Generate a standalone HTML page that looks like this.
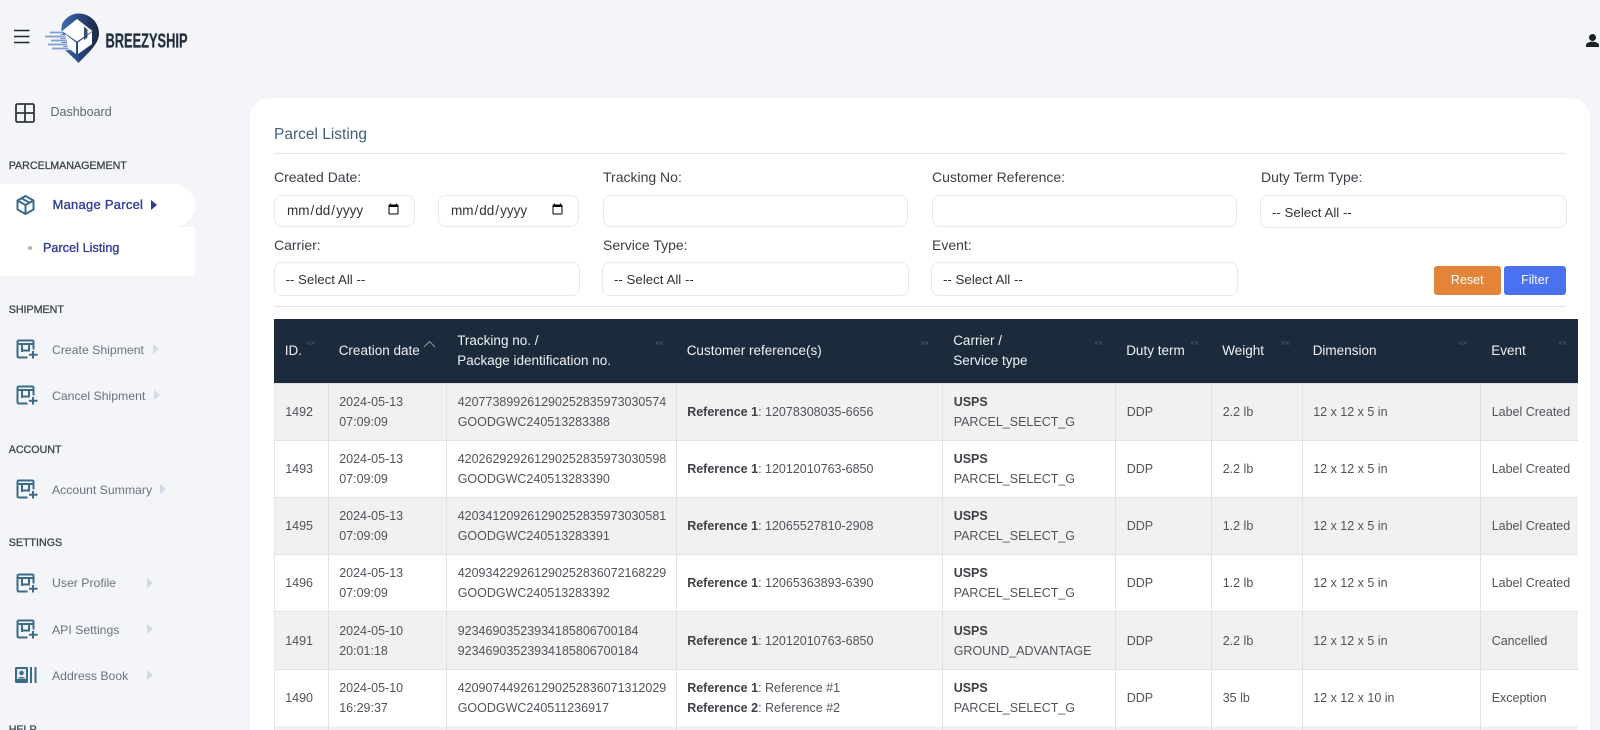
<!DOCTYPE html>
<html lang="en"><head><meta charset="utf-8"><title>Parcel Listing</title>
<style>
*{box-sizing:border-box}
html,body{margin:0;padding:0;width:1600px;height:730px;overflow:hidden;background:#f3f5f8;font-family:"Liberation Sans",sans-serif}
#w{position:relative;width:1600px;height:730px;overflow:hidden;background:#f3f5f8}
.a{position:absolute}
.s{position:absolute;white-space:nowrap;line-height:16px;font-size:12.25px;color:#6b7280;left:52px}
.h{position:absolute;left:8.7px;white-space:nowrap;font-size:10.7px;line-height:14px;color:#3f444d;font-weight:400;-webkit-text-stroke:.3px #3f444d}
.tri{position:absolute;width:0;height:0;border-left:6px solid #d3d9e6;border-top:5.5px solid transparent;border-bottom:5.5px solid transparent}
.ic{position:absolute;left:15.5px;width:22px;height:20px}
.card{position:absolute;left:250px;top:98px;width:1340px;height:632px;background:#fff;border-radius:20px 20px 0 0}
.l{position:absolute;font-size:14px;line-height:18px;color:#3a3f47;white-space:nowrap}
input,select{position:absolute;margin:0;background:#fff;border:1px solid #e9eaec;border-radius:8px;font:13.3px "Liberation Sans",sans-serif;color:#333;outline:0;appearance:none;-webkit-appearance:none}
input[type=date]{padding:0 12px 2px 11px;-webkit-appearance:auto;appearance:auto;font-size:13.5px}
select{padding:2px 11px 0}
.hr{position:absolute;left:274px;width:1292px;height:1px;background:#e3e5e8}
.b{position:absolute;top:266px;height:29px;color:#fff;font-size:12.5px;line-height:29px;text-align:center;border-radius:3px}
table{position:absolute;left:273.5px;top:319px;width:1303.5px;table-layout:fixed;border-collapse:collapse;font-size:12.5px;color:#50545a}
th{background:#1c2b3c;color:#eef1f4;font-weight:400;font-size:13.5px;line-height:20.5px;text-align:left;padding:0 0 0 10.7px;height:64.5px;position:relative}
td{padding:0 0 0 10.7px;line-height:20px;height:57px;border:1px solid #e2e2e2;white-space:nowrap;overflow:hidden}
tr.g td{background:#f1f1f1}
td:first-child{border-left:1px solid #e8e8e8}
td:last-child{border-right:0}
td b{font-weight:700;color:#3d4045}
th i{position:absolute;top:20px;font-style:normal;font-size:9px;line-height:9px;color:#46586b;letter-spacing:-1px}
.v{position:absolute;top:726px;height:4px;width:1px;background:#e2e2e2}
</style></head><body><div id="w">

<!-- hamburger -->
<svg class="a" style="left:14px;top:29px" width="16" height="15" viewBox="0 0 16 15"><path d="M0 1.500H15.500M0 7.500H15.500M0 13.500H15.500" stroke="#22262c" stroke-width="1.400" fill="none"/></svg>

<!-- logo -->
<svg class="a" style="left:44px;top:12px" width="148" height="54" viewBox="44 12 148 54">
<defs><linearGradient id="g" x1="0" y1="0" x2="1" y2="0"><stop offset="0" stop-color="#3f6fb4"/><stop offset=".55" stop-color="#27447a"/><stop offset="1" stop-color="#1a2740"/></linearGradient></defs>
<path d="M78.500 13.500C90 13.500 99 22.500 99 33.500C99 44 88 53 78.500 63C74 58 69 54 65 50L60 40L62 24C66 17 72 13.500 78.500 13.500Z" fill="url(#g)"/>
<path d="M50 32.500H63M45 36.500H66M51 40.500H66M48 44.500H68M52 48.500H70" stroke="#f3f5f8" stroke-width="3.200" fill="none"/>
<path d="M50 32.500H63M45 36.500H66M51 40.500H66M48 44.500H68M52 48.500H70" stroke="#7f9fd6" stroke-width="1.800" fill="none"/>
<path d="M62 31L77 19L92.500 31L77 41.500Z" fill="#fff"/>
<path d="M65 34L76 42.500V54L68 48Z" fill="#fff"/>
<path d="M78 42.500L92 32V44L78 54Z" fill="#fff"/>
<path d="M84 26.500L87.500 29.500V37.500L84 40Z" fill="#3a5070"/>
<text x="105.500" y="47.500" font-family="Liberation Sans" font-weight="700" font-size="20.500" fill="#222e40" stroke="#222e40" stroke-width=".25" textLength="82" lengthAdjust="spacingAndGlyphs">BREEZYSHIP</text>
</svg>

<!-- user -->
<svg class="a" style="left:1584px;top:32px" width="16" height="16" viewBox="0 0 16 16"><circle cx="8.500" cy="5.500" r="3.500" fill="#1c2026"/><path d="M2 15V13C2 10.800 6 9.600 8.500 9.600C11 9.600 15 10.800 15 13V15Z" fill="#1c2026"/></svg>

<!-- sidebar -->
<svg class="a" style="left:14.500px;top:102.500px" width="20" height="20" viewBox="0 0 20 20"><rect x="1" y="1" width="18" height="18" rx="1.500" fill="none" stroke="#33373d" stroke-width="1.800"/><path d="M10 1V19M1 10H19" stroke="#33373d" stroke-width="1.800"/></svg>
<div class="s" style="left:50.500px;top:103.500px;font-size:12.500px;color:#63676e">Dashboard</div>

<div class="h" style="top:158.500px;word-spacing:-3px">PARCEL MANAGEMENT</div>
<div class="a" style="left:0;top:184px;width:195px;height:43px;background:#fff;border-radius:0 22px 22px 0"></div>
<div class="a" style="left:0;top:227px;width:195px;height:49px;background:#fff"></div>
<svg class="a" style="left:15px;top:194px" width="22" height="22" viewBox="0 0 22 22" fill="none" stroke="#3a6b88" stroke-width="2" stroke-linejoin="round"><path d="M10.500 2L18.500 6.500V15.500L10.500 20L2.500 15.500V6.500Z"/><path d="M2.500 6.500L10.500 11L18.500 6.500M10.500 11V20M6.500 4.300L14.500 8.800"/></svg>
<div class="s" style="left:52.500px;top:197px;font-size:13px;color:#323c96;-webkit-text-stroke:.35px #323c96;letter-spacing:.25px">Manage Parcel</div>
<div class="tri" style="left:151px;top:199.500px;border-left-color:#323c96"></div>
<div class="a" style="left:27.500px;top:246px;width:4px;height:4px;border-radius:50%;background:#b4b6bb"></div>
<div class="s" style="left:43px;top:240px;font-size:12.500px;color:#323c96;-webkit-text-stroke:.35px #323c96;letter-spacing:.1px">Parcel Listing</div>

<div class="h" style="top:302.500px">SHIPMENT</div>
<svg class="ic" style="top:339px" viewBox="0 0 22 20" fill="none" stroke="#3a6b88" stroke-width="2"><path d="M11.500 18.500H3C2 18.500 1.500 18 1.500 17V3C1.500 2 2 1.500 3 1.500H16C17 1.500 17.500 2 17.500 3V10.500M1.500 5H17.500M6 13V5M6 11.500H13V5"/><path d="M17 12V19.500M13 15.700H21.500"/></svg>
<div class="s" style="top:341.500px">Create Shipment</div><div class="tri" style="left:153px;top:344px"></div>
<svg class="ic" style="top:385px" viewBox="0 0 22 20" fill="none" stroke="#3a6b88" stroke-width="2"><path d="M11.500 18.500H3C2 18.500 1.500 18 1.500 17V3C1.500 2 2 1.500 3 1.500H16C17 1.500 17.500 2 17.500 3V10.500M1.500 5H17.500M6 13V5M6 11.500H13V5"/><path d="M17 12V19.500M13 15.700H21.500"/></svg>
<div class="s" style="top:387.500px">Cancel Shipment</div><div class="tri" style="left:154px;top:390px"></div>

<div class="h" style="top:442.500px">ACCOUNT</div>
<svg class="ic" style="top:479px" viewBox="0 0 22 20" fill="none" stroke="#3a6b88" stroke-width="2"><path d="M11.500 18.500H3C2 18.500 1.500 18 1.500 17V3C1.500 2 2 1.500 3 1.500H16C17 1.500 17.500 2 17.500 3V10.500M1.500 5H17.500M6 13V5M6 11.500H13V5"/><path d="M17 12V19.500M13 15.700H21.500"/></svg>
<div class="s" style="top:481.500px">Account Summary</div><div class="tri" style="left:160px;top:484px"></div>

<div class="h" style="top:536px">SETTINGS</div>
<svg class="ic" style="top:573px" viewBox="0 0 22 20" fill="none" stroke="#3a6b88" stroke-width="2"><path d="M11.500 18.500H3C2 18.500 1.500 18 1.500 17V3C1.500 2 2 1.500 3 1.500H16C17 1.500 17.500 2 17.500 3V10.500M1.500 5H17.500M6 13V5M6 11.500H13V5"/><path d="M17 12V19.500M13 15.700H21.500"/></svg>
<div class="s" style="top:575px">User Profile</div><div class="tri" style="left:147px;top:577.500px"></div>
<svg class="ic" style="top:619px" viewBox="0 0 22 20" fill="none" stroke="#3a6b88" stroke-width="2"><path d="M11.500 18.500H3C2 18.500 1.500 18 1.500 17V3C1.500 2 2 1.500 3 1.500H16C17 1.500 17.500 2 17.500 3V10.500M1.500 5H17.500M6 13V5M6 11.500H13V5"/><path d="M17 12V19.500M13 15.700H21.500"/></svg>
<div class="s" style="top:621.500px">API Settings</div><div class="tri" style="left:147px;top:624px"></div>
<svg class="a" style="left:14px;top:665px" width="23" height="20" viewBox="0 0 23 20"><rect x="1" y="2" width="13" height="16" rx="1.500" fill="#3a6b88"/><rect x="3" y="4" width="9" height="10" fill="#e8eef2"/><circle cx="7.500" cy="8" r="2.200" fill="#3a6b88"/><path d="M4 13.500C4.500 11.500 10.500 11.500 11 13.500Z" fill="#3a6b88"/><path d="M17 2V18M21.500 2V18" stroke="#3a6b88" stroke-width="2"/></svg>
<div class="s" style="top:667.500px">Address Book</div><div class="tri" style="left:147px;top:670px"></div>
<div class="h" style="top:723px;height:7px;overflow:hidden">HELP</div>

<!-- card -->
<div class="card"></div>
<div class="a" style="left:274px;top:125.500px;font-size:15.500px;line-height:18px;color:#3f6178;white-space:nowrap">Parcel Listing</div>
<div class="hr" style="top:153px"></div>

<div class="l" style="left:274px;top:168px">Created Date:</div>
<div class="l" style="left:603px;top:168px">Tracking No:</div>
<div class="l" style="left:932px;top:168px">Customer Reference:</div>
<div class="l" style="left:1261px;top:168px">Duty Term Type:</div>
<input type="date" style="left:274px;top:195px;width:141px;height:32px">
<input type="date" style="left:438px;top:195px;width:141px;height:32px">
<input type="text" style="left:603px;top:195px;width:305px;height:32px">
<input type="text" style="left:932px;top:195px;width:305px;height:32px">
<select style="left:1260px;top:194.500px;width:306.500px;height:33px"><option>-- Select All --</option></select>

<div class="l" style="left:274px;top:236px">Carrier:</div>
<div class="l" style="left:603px;top:236px">Service Type:</div>
<div class="l" style="left:932px;top:236px">Event:</div>
<select style="left:273.500px;top:262px;width:306.500px;height:33.500px"><option>-- Select All --</option></select>
<select style="left:602px;top:262px;width:306.500px;height:33.500px"><option>-- Select All --</option></select>
<select style="left:931px;top:262px;width:307px;height:33.500px"><option>-- Select All --</option></select>
<div class="b" style="left:1434px;width:66.500px;background:#e28539">Reset</div>
<div class="b" style="left:1504px;width:62px;background:#4a72f0">Filter</div>
<div class="hr" style="top:306px"></div>

<table>
<colgroup><col style="width:54px"><col style="width:118.500px"><col style="width:229.500px"><col style="width:266.500px"><col style="width:173px"><col style="width:96px"><col style="width:90.500px"><col style="width:178.500px"><col style="width:97px"></colgroup>
<tr><th>ID.<i style="left:32px">××</i></th><th>Creation date<svg class="a" style="left:95px;top:21px" width="13" height="8" viewBox="0 0 13 8"><path d="M1 7L6.500 1.500L12 7" fill="none" stroke="#8f9aa6" stroke-width="1"/></svg></th><th>Tracking no. /<br>Package identification no.<i style="left:208px">××</i></th><th>Customer reference(s)<i style="left:244px">××</i></th><th>Carrier /<br>Service type<i style="left:151px">××</i></th><th>Duty term<i style="left:74px">××</i></th><th>Weight<i style="left:69px">××</i></th><th>Dimension<i style="left:156px">××</i></th><th>Event<i style="left:77px">××</i></th></tr>
<tr class="g"><td>1492</td><td>2024-05-13<br>07:09:09</td><td>420773899261290252835973030574<br>GOODGWC240513283388</td><td><b>Reference 1</b>: 12078308035-6656</td><td><b>USPS</b><br>PARCEL_SELECT_G</td><td>DDP</td><td>2.2 lb</td><td>12 x 12 x 5 in</td><td>Label Created</td></tr>
<tr><td>1493</td><td>2024-05-13<br>07:09:09</td><td>420262929261290252835973030598<br>GOODGWC240513283390</td><td><b>Reference 1</b>: 12012010763-6850</td><td><b>USPS</b><br>PARCEL_SELECT_G</td><td>DDP</td><td>2.2 lb</td><td>12 x 12 x 5 in</td><td>Label Created</td></tr>
<tr class="g"><td>1495</td><td>2024-05-13<br>07:09:09</td><td>420341209261290252835973030581<br>GOODGWC240513283391</td><td><b>Reference 1</b>: 12065527810-2908</td><td><b>USPS</b><br>PARCEL_SELECT_G</td><td>DDP</td><td>1.2 lb</td><td>12 x 12 x 5 in</td><td>Label Created</td></tr>
<tr><td>1496</td><td>2024-05-13<br>07:09:09</td><td>420934229261290252836072168229<br>GOODGWC240513283392</td><td><b>Reference 1</b>: 12065363893-6390</td><td><b>USPS</b><br>PARCEL_SELECT_G</td><td>DDP</td><td>1.2 lb</td><td>12 x 12 x 5 in</td><td>Label Created</td></tr>
<tr class="g"><td style="height:58px">1491</td><td>2024-05-10<br>20:01:18</td><td>92346903523934185806700184<br>92346903523934185806700184</td><td><b>Reference 1</b>: 12012010763-6850</td><td><b>USPS</b><br>GROUND_ADVANTAGE</td><td>DDP</td><td>2.2 lb</td><td>12 x 12 x 5 in</td><td>Cancelled</td></tr>
<tr><td>1490</td><td>2024-05-10<br>16:29:37</td><td>420907449261290252836071312029<br>GOODGWC240511236917</td><td><b>Reference 1</b>: Reference #1<br><b>Reference 2</b>: Reference #2</td><td><b>USPS</b><br>PARCEL_SELECT_G</td><td>DDP</td><td>35 lb</td><td>12 x 12 x 10 in</td><td>Exception</td></tr>
</table>
<div class="a" style="left:274px;top:726px;width:1303px;height:4px;background:#f1f1f1"></div>
<div class="v" style="left:274px"></div><div class="v" style="left:328px"></div><div class="v" style="left:446px"></div><div class="v" style="left:676px"></div><div class="v" style="left:942px"></div><div class="v" style="left:1115px"></div><div class="v" style="left:1211px"></div><div class="v" style="left:1302px"></div><div class="v" style="left:1480px"></div>
</div></body></html>
